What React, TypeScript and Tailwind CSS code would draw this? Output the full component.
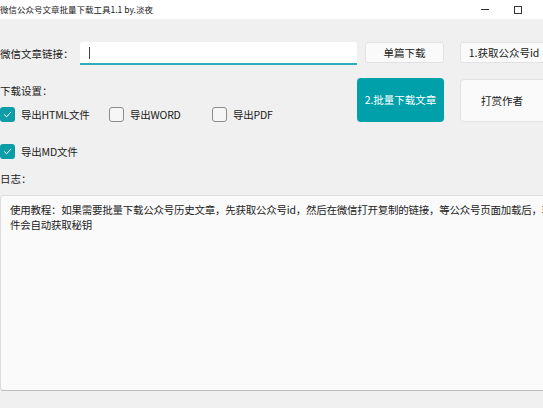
import React from "react";

const font = { fontFamily: '"Noto Sans CJK SC", "Noto Sans", sans-serif' };

const Check = ({ checked, label }: { checked: boolean; label: string }) => (
  <div className="flex items-center">
    {checked ? (
      <div className="flex h-[15px] w-[15px] items-center justify-center rounded-[3px] bg-[#0d9da8]">
        <svg width="9" height="9" viewBox="0 0 10 10" fill="none">
          <path d="M1.5 5.2 L4 7.6 L8.6 2.4" stroke="white" strokeWidth="1.1" strokeLinecap="round" strokeLinejoin="round" />
        </svg>
      </div>
    ) : (
      <div className="h-[15px] w-[15px] rounded-[3px] border border-[#8c8c8c] bg-[#f6f6f6]" />
    )}
    <span className="ml-[6px] text-[10.5px] tracking-[-0.2px] text-[#1a1a1a]">{label}</span>
  </div>
);

export default function App() {
  return (
    <div className="h-[408px] w-[543px] overflow-hidden bg-[#f0f0f0]" style={font}>
      {/* title bar */}
      <div className="flex h-[19px] w-[543px] items-center bg-white">
        <span className="text-[8.5px] leading-none text-[#222]">微信公众号文章批量下载工具1.1 by.淡夜</span>
        <div className="ml-auto flex items-center">
          <div className="h-px w-[8px] bg-[#333]" />
          <div className="ml-[25px] mr-[21px] h-[8px] w-[8px] border border-[#333]" />
        </div>
      </div>

      <div className="w-[640px]">
        {/* link row */}
        <div className="mt-[23px] flex items-start">
          <div className="flex h-[23px] w-[80px] items-center text-[10.5px] text-[#1a1a1a]">微信文章链接：</div>
          <div className="flex h-[23px] w-[277px] items-center rounded-t-[3px] border-b-2 border-[#2aaeb8] bg-white pl-[9px]">
            <div className="h-[12px] w-px bg-[#444]" />
          </div>
          <button className="ml-[8px] h-[21px] w-[79px] rounded-[3px] border border-[#e2e2e2] bg-[#fafafa] text-[10.5px] text-[#1a1a1a]">
            单篇下载
          </button>
          <button className="ml-[16px] h-[21px] w-[90px] rounded-[3px] border border-[#e2e2e2] bg-[#fafafa] pr-[2px] text-[10.5px] text-[#1a1a1a]">
            1.获取公众号id
          </button>
        </div>

        {/* settings row */}
        <div className="mt-[13px] flex items-start">
          <div className="w-[357px]">
            <div className="mt-[5px] text-[10.5px] leading-[16px] text-[#1a1a1a]">下载设置：</div>
            <div className="mt-[8px] flex">
              <div className="w-[109px]">
                <Check checked label="导出HTML文件" />
              </div>
              <div className="w-[103px]">
                <Check checked={false} label="导出WORD" />
              </div>
              <Check checked={false} label="导出PDF" />
            </div>
            <div className="mt-[21px]">
              <Check checked label="导出MD文件" />
            </div>
          </div>
          <button className="h-[44px] w-[87px] rounded-[4px] bg-[#00a0aa] text-[10.5px] text-white">2.批量下载文章</button>
          <button className="ml-[16px] mt-px h-[43px] w-[90px] rounded-[4px] border border-[#e2e2e2] bg-[#fafafa] pr-[6px] text-[10.5px] text-[#1a1a1a]">
            打赏作者
          </button>
        </div>

        {/* log */}
        <div className="mt-[11px] text-[10.5px] leading-[16px] text-[#1a1a1a]">日志：</div>
        <div className="mt-[8px] h-[196px] rounded-[3px] border border-[#dcdcdc] border-b-[#bdbdbd] bg-[#fafafa] px-[9px] pt-[6px] text-[10.5px] leading-[15px] tracking-[-0.25px] text-[#222]">
          <div className="whitespace-nowrap">
            使用教程：如果需要批量下载公众号历史文章，先获取公众号id，然后在微信打开复制的链接，等公众号页面加载后，软
          </div>
          <div className="whitespace-nowrap">件会自动获取秘钥</div>
        </div>
      </div>
    </div>
  );
}
